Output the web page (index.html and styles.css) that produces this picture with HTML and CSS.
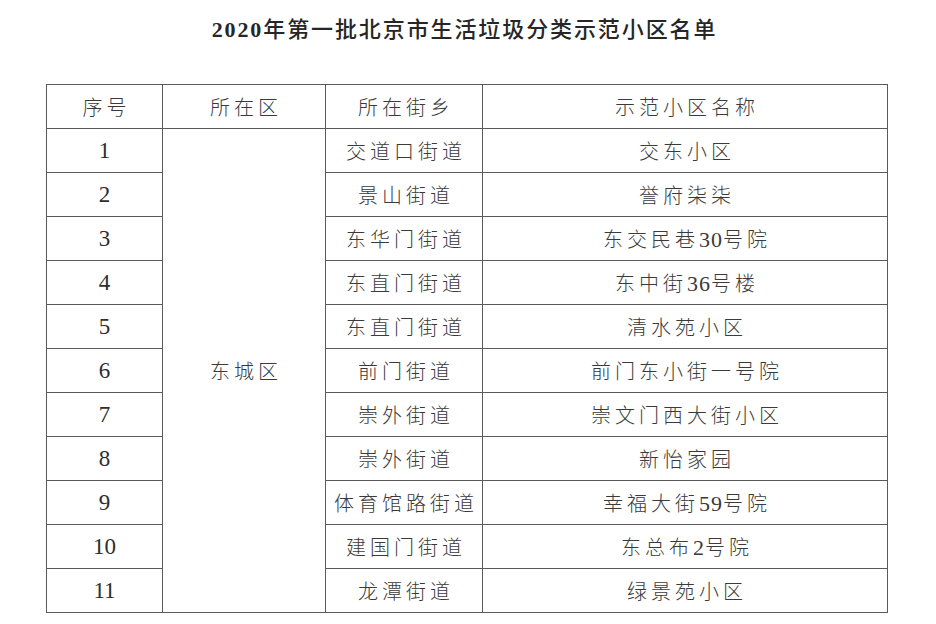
FILE: index.html
```html
<!DOCTYPE html>
<html lang="zh-CN">
<head>
<meta charset="utf-8">
<title>2020年第一批北京市生活垃圾分类示范小区名单</title>
<link rel="stylesheet" href="styles.css">
</head>
<body>
<div class="page">
  <h1 class="title"><span class="year">2020</span>年第一批北京市生活垃圾分类示范小区名单</h1>
  <table class="list">
    <colgroup>
      <col class="c1"><col class="c2"><col class="c3"><col class="c4">
    </colgroup>
    <thead>
      <tr><th>序号</th><th>所在区</th><th>所在街乡</th><th>示范小区名称</th></tr>
    </thead>
    <tbody>
      <tr><td class="num">1</td><td rowspan="11">东城区</td><td>交道口街道</td><td>交东小区</td></tr>
      <tr><td class="num">2</td><td>景山街道</td><td>誉府柒柒</td></tr>
      <tr><td class="num">3</td><td>东华门街道</td><td>东交民巷<span class="d">30</span>号院</td></tr>
      <tr><td class="num">4</td><td>东直门街道</td><td>东中街<span class="d">36</span>号楼</td></tr>
      <tr><td class="num">5</td><td>东直门街道</td><td>清水苑小区</td></tr>
      <tr><td class="num">6</td><td>前门街道</td><td>前门东小街一号院</td></tr>
      <tr><td class="num">7</td><td>崇外街道</td><td>崇文门西大街小区</td></tr>
      <tr><td class="num">8</td><td>崇外街道</td><td>新怡家园</td></tr>
      <tr><td class="num">9</td><td>体育馆路街道</td><td>幸福大街<span class="d">59</span>号院</td></tr>
      <tr><td class="num">10</td><td>建国门街道</td><td>东总布<span class="d">2</span>号院</td></tr>
      <tr><td class="num">11</td><td>龙潭街道</td><td>绿景苑小区</td></tr>
    </tbody>
  </table>
</div>
</body>
</html>
```

FILE: styles.css
```css
html, body {
  margin: 0;
  padding: 0;
  background: #ffffff;
}

.page {
  width: 936px;
  height: 624px;
  padding-top: 16px;
  box-sizing: border-box;
}

.title {
  margin: 0;
  height: 28px;
  line-height: 28px;
  padding-right: 7px;
  text-align: center;
  font-family: "Liberation Serif", "Noto Sans CJK SC", serif;
  font-size: 22px;
  font-weight: 500;
  color: #262626;
  letter-spacing: 1.9px;
}

.title .year {
  font-weight: 700;
}

.list {
  margin: 40px 0 0 46px;
  width: 841px;
  border-collapse: collapse;
  table-layout: fixed;
  font-family: "Liberation Serif", "Noto Sans CJK SC", serif;
  font-size: 20px;
  font-weight: 300;
  color: #3a3a3a;
}

.c1 { width: 116px; }
.c2 { width: 163px; }
.c3 { width: 157px; }
.c4 { width: 405px; }

.list th,
.list td {
  border: 1px solid #5a5a5a;
  height: 43px;
  padding: 0 0 0 4px;
  text-align: center;
  vertical-align: middle;
  letter-spacing: 4px;
  font-weight: 300;
  white-space: nowrap;
}

.list td .d {
  font-size: 22px;
  letter-spacing: 1px;
}

.list td.num {
  font-size: 23px;
  letter-spacing: 0;
  padding: 0;
  color: #2e2e2e;
}
```
